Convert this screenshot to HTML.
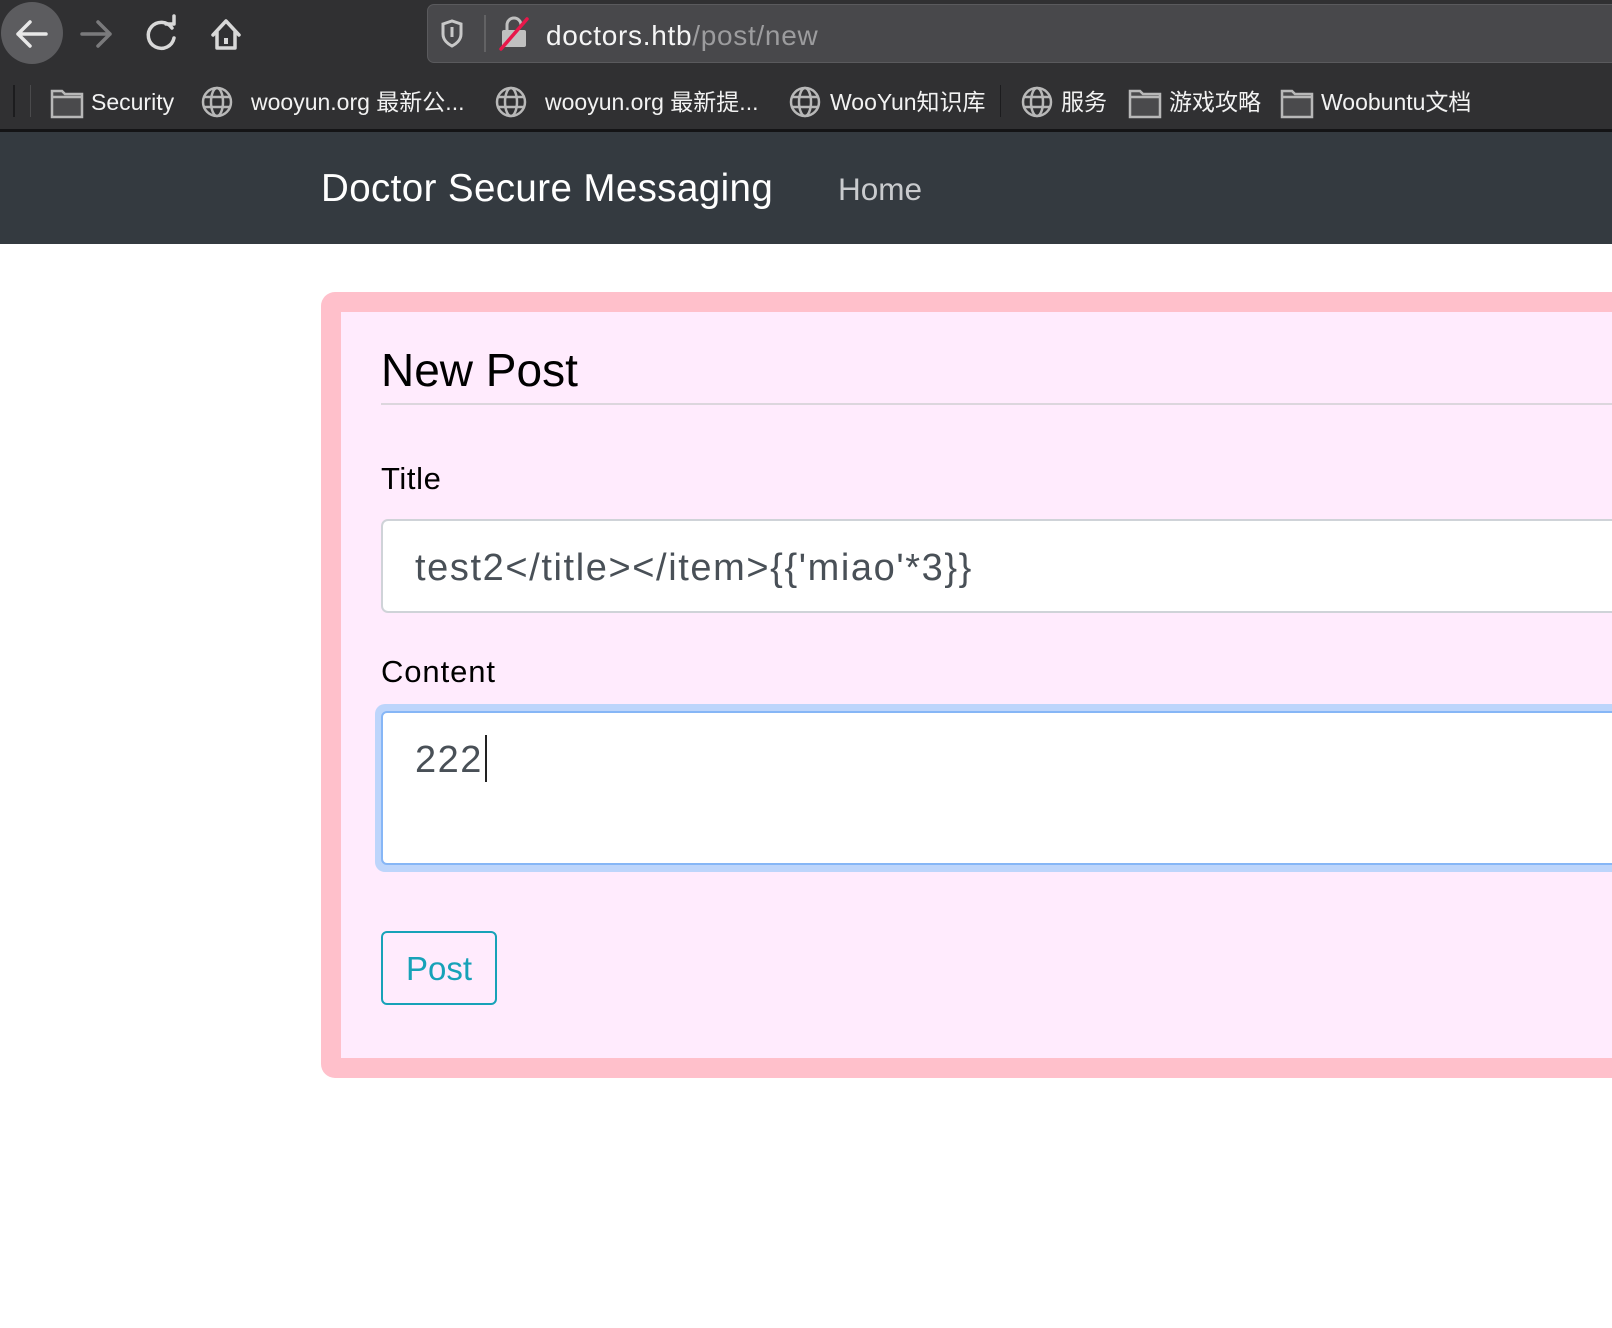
<!DOCTYPE html>
<html><head><meta charset="utf-8"><style>
*{margin:0;padding:0;box-sizing:border-box}
body{width:1612px;height:1328px;overflow:hidden;background:#fff;font-family:"Liberation Sans","Noto Sans CJK SC",sans-serif;position:relative}
.abs{position:absolute}
#chrome{position:absolute;left:0;top:0;width:1612px;height:130px;background:#303032}
#line{position:absolute;left:0;top:129px;width:1612px;height:3px;background:#141416}
.bm{position:absolute;top:87px;font-size:23px;color:#f2f2f2;line-height:30px;white-space:nowrap}
#nav{position:absolute;left:0;top:132px;width:1612px;height:112px;background:#343a40}
#card{position:absolute;left:321px;top:292px;width:1400px;height:786px;background:#ffc0cb;border-radius:14px}
#inner{position:absolute;left:341px;top:312px;width:1400px;height:746px;background:#ffebfd}
</style></head><body>
<div id="chrome">
  <div class="abs" style="left:1px;top:2px;width:62px;height:62px;border-radius:50%;background:#5c5c5f"></div>
  <svg class="abs" style="left:0;top:0" width="260" height="70" fill="none" stroke-linecap="round" stroke-linejoin="round">
    <path d="M46 34H18M30 22L18 34L30 46" stroke="#e8e8e8" stroke-width="3.5"/>
    <path d="M82 34H110M98 22L110 34L98 46" stroke="#7a7a7c" stroke-width="3.5"/>
    <path d="M172 28A13 13 0 1 0 174 38" stroke="#d8d8d8" stroke-width="3.5"/>
    <path d="M166 24H174V16" stroke="#d8d8d8" stroke-width="3.5"/>
    <path d="M213 35L226 21L239 35M217 32V48H235V32" stroke="#d8d8d8" stroke-width="3.5"/>
    <rect x="224" y="38" width="4" height="6" fill="#d8d8d8" stroke="none"/>
  </svg>
  <div class="abs" style="left:427px;top:4px;width:1300px;height:59px;background:#48484b;border:1px solid #5a5a5d;border-radius:7px"></div>
  <svg class="abs" style="left:427px;top:4px" width="110" height="59" fill="none">
    <path d="M16 20L25 17L34 20V30C34 36 29 40 25 42C21 40 16 36 16 30Z" stroke="#c8c8c8" stroke-width="3"/>
    <path d="M25 23V33" stroke="#c8c8c8" stroke-width="3"/>
    <line x1="58" y1="11" x2="58" y2="48" stroke="#6a6a6c" stroke-width="1.5"/>
    <rect x="75" y="26" width="24" height="17" rx="2" fill="#c0c0c0"/>
    <path d="M80 26V21A7 7 0 0 1 94 21" stroke="#c0c0c0" stroke-width="3"/>
    <path d="M74 45L100 15" stroke="#e8174a" stroke-width="3.5" stroke-linecap="round"/>
  </svg>
  <div class="abs" style="left:546px;top:18px;font-size:28px;line-height:36px;color:#f5f5f5;white-space:nowrap;letter-spacing:0.7px">doctors.htb<span style="color:#9c9c9e">/post/new</span></div>

  <div class="abs" style="left:13px;top:85px;width:2px;height:32px;background:#1c1c1e"></div>
  <div class="abs" style="left:30px;top:85px;width:1px;height:32px;background:#4a4a4c"></div>
  <div class="abs" style="left:1000px;top:85px;width:1px;height:32px;background:#1c1c1e"></div>
  <svg class="abs" style="left:0;top:80px" width="1612" height="44" fill="none" stroke="#b8b8b8" stroke-width="2.5">
    <g id="f"><path d="M52 11H62L65 14H82V37H52Z" fill="#4a4a4c"/><path d="M52 17H82"/></g>
    <use href="#f" x="1078"/><use href="#f" x="1230"/>
    <g id="g"><circle cx="217" cy="22" r="14"/><ellipse cx="217" cy="22" rx="6" ry="14"/><path d="M203 17H231M203 27H231"/></g>
    <use href="#g" x="294"/><use href="#g" x="588"/><use href="#g" x="820"/>
  </svg>
  <div class="bm" style="left:91px">Security</div>
  <div class="bm" style="left:251px">wooyun.org 最新公...</div>
  <div class="bm" style="left:545px">wooyun.org 最新提...</div>
  <div class="bm" style="left:830px">WooYun知识库</div>
  <div class="bm" style="left:1061px">服务</div>
  <div class="bm" style="left:1169px">游戏攻略</div>
  <div class="bm" style="left:1321px">Woobuntu文档</div>
</div>
<div id="line"></div>
<div id="nav">
  <div class="abs" style="left:321px;top:35px;font-size:38.5px;line-height:44px;color:#fff;white-space:nowrap;letter-spacing:0.4px">Doctor Secure Messaging</div>
  <div class="abs" style="left:838px;top:37px;font-size:31.5px;line-height:40px;color:#c9cbce">Home</div>
</div>
<div id="card"></div>
<div id="inner"></div>
<div class="abs" style="left:381px;top:343px;font-size:46px;line-height:54px;color:#000;white-space:nowrap">New Post</div>
<div class="abs" style="left:381px;top:403px;width:1300px;height:2px;background:#dcd6dd"></div>
<div class="abs" style="left:381px;top:461px;font-size:31px;line-height:36px;color:#000;letter-spacing:0.6px">Title</div>
<div class="abs" style="left:381px;top:519px;width:1300px;height:94px;background:#fff;border:2px solid #cfd3d8;border-radius:7px"></div>
<div class="abs" style="left:415px;top:545px;font-size:38px;line-height:46px;color:#495057;white-space:nowrap;letter-spacing:1.6px">test2&lt;/title&gt;&lt;/item&gt;{{'miao'*3}}</div>
<div class="abs" style="left:381px;top:654px;font-size:31px;line-height:36px;color:#000;letter-spacing:0.9px">Content</div>
<div class="abs" style="left:375px;top:704px;width:1300px;height:168px;background:#bdd5fb;border-radius:10px"></div>
<div class="abs" style="left:381px;top:711px;width:1300px;height:154px;background:#fff;border:2px solid #86b6f6;border-radius:6px"></div>
<div class="abs" style="left:415px;top:737px;font-size:38px;line-height:46px;color:#495057;letter-spacing:1.5px">222</div>
<div class="abs" style="left:485px;top:735px;width:2px;height:47px;background:#222"></div>
<div class="abs" style="left:381px;top:931px;width:116px;height:74px;border:2px solid #17a2b8;border-radius:6px;color:#17a2b8;font-size:33px;line-height:72px;text-align:center">Post</div>
</body></html>
